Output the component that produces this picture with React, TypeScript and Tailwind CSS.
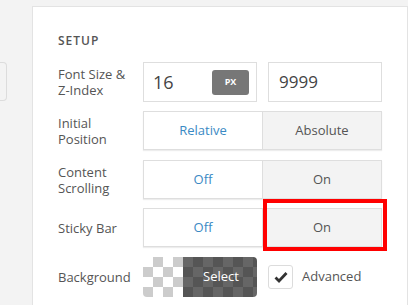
import React from "react";

function Label({ children }: { children: React.ReactNode }) {
  return (
    <div className="w-[85px] shrink-0 text-[13px] leading-[16px] text-[#555]">{children}</div>
  );
}

function Segmented({ left, right }: { left: string; right: string }) {
  return (
    <div className="flex h-[39px] w-[239px] shadow-[0_1px_1px_rgba(0,0,0,0.07)]">
      <div className="flex w-[120px] items-center justify-center border border-[#dedede] bg-white text-[13px] text-[#3a8ac4]">
        {left}
      </div>
      <div className="flex flex-1 items-center justify-center border border-l-0 border-[#dedede] bg-[#f3f3f3] text-[13px] text-[#555]">
        {right}
      </div>
    </div>
  );
}

export default function App() {
  return (
    <div className="flex h-[305px] w-[408px] overflow-hidden bg-[#f3f3f3] pt-[6px] font-['Open_Sans',sans-serif]">
      <div className="w-[32px] shrink-0 pt-[56px]">
        <div className="h-[39px] w-[7px] rounded-r-[4px] border border-l-0 border-[#dcdcdc] bg-[#f3f3f3]" />
      </div>
      <div className="flex-1 border-l border-r border-t border-[#e3e3e3] bg-white pl-[25px] pt-[26px]">
        <div className="text-[12px] font-semibold leading-[16px] tracking-[1px] text-[#555]">SETUP</div>
        <div className="mt-[13px] flex flex-col">
          <div className="flex items-center">
            <Label>
              Font Size &amp;
              <br />
              Z-Index
            </Label>
            <div className="flex gap-[11px]">
              <div className="flex h-[40px] w-[114px] items-center justify-between border border-[#dedede] bg-white pl-[9px] pr-[7px]">
                <span className="text-[18px] text-[#444]">16</span>
                <span className="flex h-[25px] w-[37px] items-center justify-center rounded-[3px] bg-[#777] text-[9px] font-bold text-white">
                  PX
                </span>
              </div>
              <div className="flex h-[40px] w-[114px] items-center border border-[#dedede] bg-white pl-[10px]">
                <span className="text-[17px] text-[#444]">9999</span>
              </div>
            </div>
          </div>
          <div className="mt-[9px] flex items-center">
            <Label>
              Initial
              <br />
              Position
            </Label>
            <Segmented left="Relative" right="Absolute" />
          </div>
          <div className="mt-[10px] flex items-center">
            <Label>
              Content
              <br />
              Scrolling
            </Label>
            <Segmented left="Off" right="On" />
          </div>
          <div className="mt-[9px] flex items-center">
            <Label>Sticky Bar</Label>
            <div className="relative">
              <Segmented left="Off" right="On" />
              <div className="absolute left-[120px] top-[-9px] h-[52px] w-[124px] border-[4px] border-[#ff0000]" />
            </div>
          </div>
          <div className="mt-[10px] flex items-center">
            <Label>Background</Label>
            <div className="relative flex h-[40px] w-[114px] overflow-hidden rounded-[4px]">
              <div className="w-[40px] bg-[conic-gradient(#cccccc_25%,#ffffff_0_50%,#cccccc_0_75%,#ffffff_0)] bg-[length:20px_20px]" />
              <div className="flex-1 bg-[conic-gradient(#555555_25%,#666666_0_50%,#555555_0_75%,#666666_0)] bg-[length:20px_20px]" />
              <span className="absolute left-[60px] top-0 flex h-full items-center text-[13px] text-white">Select</span>
            </div>
            <div className="ml-[11px] flex h-[24px] w-[25px] items-center justify-center rounded-[3px] border border-[#dcdcdc] bg-white">
              <svg width="14" height="12" viewBox="0 0 14 12">
                <path d="M1.5 6.5 L5 10 L12.5 2" fill="none" stroke="#333" strokeWidth="2.8" />
              </svg>
            </div>
            <span className="ml-[9px] text-[13px] text-[#555]">Advanced</span>
          </div>
        </div>
      </div>
    </div>
  );
}
